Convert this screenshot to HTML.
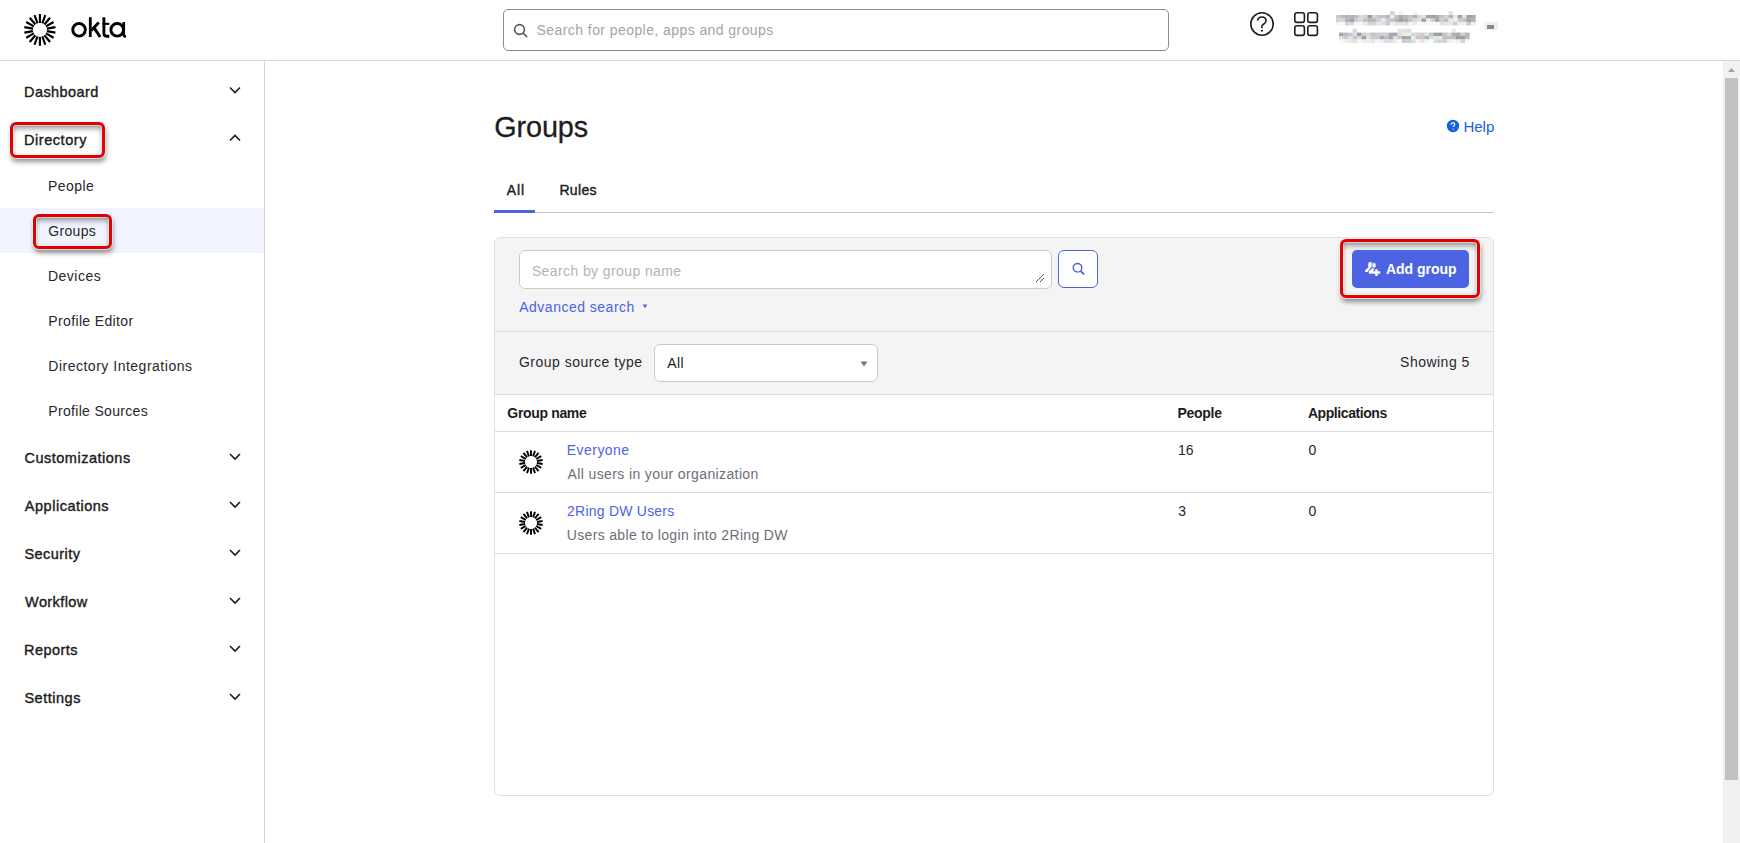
<!DOCTYPE html><html><head><meta charset="utf-8"><style>
html,body{margin:0;padding:0;width:1740px;height:843px;overflow:hidden;background:#fff;position:relative;font-family:"Liberation Sans", sans-serif;}
.t{position:absolute;white-space:nowrap;}
</style></head><body>
<div style="position:absolute;left:0px;top:60px;width:1740px;height:1px;background:#d8d8dc"></div>
<svg style="position:absolute;left:0;top:0" width="140" height="60"><path d="M46.79 31.12L55.46 32.64M45.96 33.40L53.58 37.80M44.40 35.26L50.06 42.00M42.29 36.48L45.30 44.75M39.90 36.90L39.90 45.70M37.51 36.48L34.50 44.75M35.40 35.26L29.74 42.00M33.84 33.40L26.22 37.80M33.01 31.12L24.34 32.64M33.01 28.68L24.34 27.16M33.84 26.40L26.22 22.00M35.40 24.54L29.74 17.80M37.51 23.32L34.50 15.05M39.90 22.90L39.90 14.10M42.29 23.32L45.30 15.05M44.40 24.54L50.06 17.80M45.96 26.40L53.58 22.00M46.79 28.68L55.46 27.16" stroke="#000" stroke-width="2.15" fill="none"/></svg>
<svg style="position:absolute;left:0;top:0" width="140" height="60" fill="none" stroke="#000"><circle cx="79.05" cy="29.85" r="6.3" stroke-width="2.9"/><path d="M90.3 17.2V37" stroke-width="2.8"/><path d="M91.2 30.6L98.8 22.4" stroke-width="2.9"/><path d="M94.3 28.2L100.2 37" stroke-width="3.0"/><path d="M103.9 17.2V33.6c0 1.9 0.9 2.6 2.6 2.6H109.3" stroke-width="2.9"/><path d="M102.5 23.85H109.3" stroke-width="2.1"/><circle cx="117.2" cy="29.85" r="6.3" stroke-width="2.9"/><path d="M123.75 22.1V34.4c0 1.3 0.8 2.1 2.2 2.1" stroke-width="2.6"/></svg>
<div style="position:absolute;left:503px;top:9px;width:666px;height:42px;box-sizing:border-box;border:1px solid #8c8c96;border-radius:5px;background:#fff"></div>
<svg style="position:absolute;left:512.6px;top:22.6px" width="16" height="16"><circle cx="6.5" cy="6.5" r="4.9" stroke="#56565c" stroke-width="1.6" fill="none"/><path d="M10 10L14 14" stroke="#56565c" stroke-width="1.7"/></svg>
<div class="t" style="left:536.58px;top:23.25px;font-size:14px;line-height:14px;font-weight:400;color:#a3a3aa;letter-spacing:0.428px">Search for people, apps and groups</div>
<svg style="position:absolute;left:1248px;top:10px" width="28" height="28"><circle cx="14" cy="14" r="11.2" stroke="#1d1d21" stroke-width="1.6" fill="none"/><path d="M9.5 10.6C9.8 8.3 11.7 7 14 7C16.4 7 18 8.6 18 10.7C18 12.7 16.4 13.6 15.2 14.4C14.3 15 13.9 15.7 13.9 16.6V18.2" stroke="#1d1d21" stroke-width="1.6" fill="none"/><circle cx="13.95" cy="20.7" r="1.05" fill="#1d1d21"/></svg>
<svg style="position:absolute;left:1292px;top:10px" width="30" height="30"><rect x="2.8" y="2.8" width="9.6" height="9.6" rx="2.2" stroke="#1d1d21" stroke-width="1.6" fill="none"/><rect x="15.8" y="2.8" width="9.6" height="9.6" rx="2.2" stroke="#1d1d21" stroke-width="1.6" fill="none"/><rect x="2.8" y="15.8" width="9.6" height="9.6" rx="2.2" stroke="#1d1d21" stroke-width="1.6" fill="none"/><rect x="15.8" y="15.8" width="9.6" height="9.6" rx="2.2" stroke="#1d1d21" stroke-width="1.6" fill="none"/></svg>
<svg style="position:absolute;left:1336px;top:11px" width="140" height="34"><rect x="9.0" y="0.2" width="4.7" height="4.0" fill="rgb(255,248,242)"/><rect x="22.5" y="0.2" width="4.7" height="4.0" fill="rgb(255,250,255)"/><rect x="54.0" y="0.2" width="4.7" height="4.0" fill="rgb(213,214,214)"/><rect x="63.0" y="0.2" width="4.7" height="4.0" fill="rgb(238,243,249)"/><rect x="76.5" y="0.2" width="4.7" height="4.0" fill="rgb(248,240,255)"/><rect x="112.5" y="0.2" width="4.7" height="4.0" fill="rgb(225,232,232)"/><rect x="0.0" y="4.0" width="4.7" height="3.6" fill="rgb(201,203,206)"/><rect x="4.5" y="4.0" width="4.7" height="3.6" fill="rgb(188,181,190)"/><rect x="9.0" y="4.0" width="4.7" height="3.6" fill="rgb(182,176,192)"/><rect x="13.5" y="4.0" width="4.7" height="3.6" fill="rgb(179,177,191)"/><rect x="18.0" y="4.0" width="4.7" height="3.6" fill="rgb(186,186,202)"/><rect x="22.5" y="4.0" width="4.7" height="3.6" fill="rgb(211,219,219)"/><rect x="27.0" y="4.0" width="4.7" height="3.6" fill="rgb(219,205,215)"/><rect x="31.5" y="4.0" width="4.7" height="3.6" fill="rgb(153,155,153)"/><rect x="36.0" y="4.0" width="4.7" height="3.6" fill="rgb(213,212,219)"/><rect x="40.5" y="4.0" width="4.7" height="3.6" fill="rgb(198,198,202)"/><rect x="45.0" y="4.0" width="4.7" height="3.6" fill="rgb(201,191,189)"/><rect x="49.5" y="4.0" width="4.7" height="3.6" fill="rgb(177,181,189)"/><rect x="54.0" y="4.0" width="4.7" height="3.6" fill="rgb(244,238,229)"/><rect x="58.5" y="4.0" width="4.7" height="3.6" fill="rgb(191,192,187)"/><rect x="63.0" y="4.0" width="4.7" height="3.6" fill="rgb(168,170,176)"/><rect x="67.5" y="4.0" width="4.7" height="3.6" fill="rgb(181,184,187)"/><rect x="72.0" y="4.0" width="4.7" height="3.6" fill="rgb(196,197,205)"/><rect x="76.5" y="4.0" width="4.7" height="3.6" fill="rgb(172,179,176)"/><rect x="81.0" y="4.0" width="4.7" height="3.6" fill="rgb(210,214,218)"/><rect x="85.5" y="4.0" width="4.7" height="3.6" fill="rgb(219,228,218)"/><rect x="90.0" y="4.0" width="4.7" height="3.6" fill="rgb(165,159,161)"/><rect x="94.5" y="4.0" width="4.7" height="3.6" fill="rgb(150,163,172)"/><rect x="99.0" y="4.0" width="4.7" height="3.6" fill="rgb(175,165,171)"/><rect x="103.5" y="4.0" width="4.7" height="3.6" fill="rgb(194,195,194)"/><rect x="108.0" y="4.0" width="4.7" height="3.6" fill="rgb(217,209,203)"/><rect x="112.5" y="4.0" width="4.7" height="3.6" fill="rgb(180,179,174)"/><rect x="117.0" y="4.0" width="4.7" height="3.6" fill="rgb(240,230,240)"/><rect x="121.5" y="4.0" width="4.7" height="3.6" fill="rgb(165,163,152)"/><rect x="126.0" y="4.0" width="4.7" height="3.6" fill="rgb(227,225,235)"/><rect x="130.5" y="4.0" width="4.7" height="3.6" fill="rgb(169,155,154)"/><rect x="135.0" y="4.0" width="4.7" height="3.6" fill="rgb(180,165,170)"/><rect x="0.0" y="7.4" width="4.7" height="3.6" fill="rgb(205,205,215)"/><rect x="4.5" y="7.4" width="4.7" height="3.6" fill="rgb(214,211,219)"/><rect x="9.0" y="7.4" width="4.7" height="3.6" fill="rgb(176,176,178)"/><rect x="13.5" y="7.4" width="4.7" height="3.6" fill="rgb(159,163,154)"/><rect x="18.0" y="7.4" width="4.7" height="3.6" fill="rgb(200,207,205)"/><rect x="22.5" y="7.4" width="4.7" height="3.6" fill="rgb(219,214,217)"/><rect x="27.0" y="7.4" width="4.7" height="3.6" fill="rgb(185,194,196)"/><rect x="31.5" y="7.4" width="4.7" height="3.6" fill="rgb(189,177,188)"/><rect x="36.0" y="7.4" width="4.7" height="3.6" fill="rgb(180,184,186)"/><rect x="40.5" y="7.4" width="4.7" height="3.6" fill="rgb(207,209,214)"/><rect x="45.0" y="7.4" width="4.7" height="3.6" fill="rgb(233,232,247)"/><rect x="49.5" y="7.4" width="4.7" height="3.6" fill="rgb(201,202,209)"/><rect x="54.0" y="7.4" width="4.7" height="3.6" fill="rgb(198,189,188)"/><rect x="58.5" y="7.4" width="4.7" height="3.6" fill="rgb(174,181,183)"/><rect x="63.0" y="7.4" width="4.7" height="3.6" fill="rgb(152,158,157)"/><rect x="67.5" y="7.4" width="4.7" height="3.6" fill="rgb(174,171,170)"/><rect x="72.0" y="7.4" width="4.7" height="3.6" fill="rgb(193,190,202)"/><rect x="76.5" y="7.4" width="4.7" height="3.6" fill="rgb(220,219,217)"/><rect x="81.0" y="7.4" width="4.7" height="3.6" fill="rgb(229,224,219)"/><rect x="85.5" y="7.4" width="4.7" height="3.6" fill="rgb(158,163,153)"/><rect x="90.0" y="7.4" width="4.7" height="3.6" fill="rgb(233,238,238)"/><rect x="94.5" y="7.4" width="4.7" height="3.6" fill="rgb(205,201,205)"/><rect x="99.0" y="7.4" width="4.7" height="3.6" fill="rgb(170,156,164)"/><rect x="103.5" y="7.4" width="4.7" height="3.6" fill="rgb(206,204,210)"/><rect x="108.0" y="7.4" width="4.7" height="3.6" fill="rgb(184,196,183)"/><rect x="112.5" y="7.4" width="4.7" height="3.6" fill="rgb(228,236,230)"/><rect x="117.0" y="7.4" width="4.7" height="3.6" fill="rgb(242,239,247)"/><rect x="121.5" y="7.4" width="4.7" height="3.6" fill="rgb(192,204,198)"/><rect x="126.0" y="7.4" width="4.7" height="3.6" fill="rgb(195,188,187)"/><rect x="130.5" y="7.4" width="4.7" height="3.6" fill="rgb(165,162,153)"/><rect x="135.0" y="7.4" width="4.7" height="3.6" fill="rgb(177,178,183)"/><rect x="0.0" y="10.8" width="4.7" height="3.6" fill="rgb(244,240,249)"/><rect x="4.5" y="10.8" width="4.7" height="3.6" fill="rgb(245,250,249)"/><rect x="9.0" y="10.8" width="4.7" height="3.6" fill="rgb(208,210,209)"/><rect x="13.5" y="10.8" width="4.7" height="3.6" fill="rgb(219,216,213)"/><rect x="18.0" y="10.8" width="4.7" height="3.6" fill="rgb(235,245,254)"/><rect x="22.5" y="10.8" width="4.7" height="3.6" fill="rgb(248,240,240)"/><rect x="27.0" y="10.8" width="4.7" height="3.6" fill="rgb(232,236,230)"/><rect x="31.5" y="10.8" width="4.7" height="3.6" fill="rgb(215,210,200)"/><rect x="36.0" y="10.8" width="4.7" height="3.6" fill="rgb(212,215,209)"/><rect x="40.5" y="10.8" width="4.7" height="3.6" fill="rgb(232,231,227)"/><rect x="45.0" y="10.8" width="4.7" height="3.6" fill="rgb(215,224,233)"/><rect x="49.5" y="10.8" width="4.7" height="3.6" fill="rgb(196,206,207)"/><rect x="54.0" y="10.8" width="4.7" height="3.6" fill="rgb(241,244,238)"/><rect x="58.5" y="10.8" width="4.7" height="3.6" fill="rgb(222,229,226)"/><rect x="63.0" y="10.8" width="4.7" height="3.6" fill="rgb(223,228,241)"/><rect x="67.5" y="10.8" width="4.7" height="3.6" fill="rgb(219,226,221)"/><rect x="72.0" y="10.8" width="4.7" height="3.6" fill="rgb(244,242,244)"/><rect x="76.5" y="10.8" width="4.7" height="3.6" fill="rgb(240,237,226)"/><rect x="81.0" y="10.8" width="4.7" height="3.6" fill="rgb(247,251,255)"/><rect x="85.5" y="10.8" width="4.7" height="3.6" fill="rgb(237,243,247)"/><rect x="90.0" y="10.8" width="4.7" height="3.6" fill="rgb(240,247,253)"/><rect x="94.5" y="10.8" width="4.7" height="3.6" fill="rgb(255,248,251)"/><rect x="99.0" y="10.8" width="4.7" height="3.6" fill="rgb(247,248,243)"/><rect x="103.5" y="10.8" width="4.7" height="3.6" fill="rgb(219,227,233)"/><rect x="108.0" y="10.8" width="4.7" height="3.6" fill="rgb(233,226,223)"/><rect x="112.5" y="10.8" width="4.7" height="3.6" fill="rgb(239,227,240)"/><rect x="117.0" y="10.8" width="4.7" height="3.6" fill="rgb(214,205,197)"/><rect x="121.5" y="10.8" width="4.7" height="3.6" fill="rgb(229,240,242)"/><rect x="126.0" y="10.8" width="4.7" height="3.6" fill="rgb(246,233,245)"/><rect x="130.5" y="10.8" width="4.7" height="3.6" fill="rgb(200,200,214)"/><rect x="135.0" y="10.8" width="4.7" height="3.6" fill="rgb(235,238,236)"/><rect x="16.5" y="17.8" width="4.7" height="4.0" fill="rgb(215,219,223)"/><rect x="61.5" y="17.8" width="4.7" height="4.0" fill="rgb(225,228,227)"/><rect x="66.0" y="17.8" width="4.7" height="4.0" fill="rgb(221,231,223)"/><rect x="70.5" y="17.8" width="4.7" height="4.0" fill="rgb(222,221,219)"/><rect x="115.5" y="17.8" width="4.7" height="4.0" fill="rgb(228,238,228)"/><rect x="3.0" y="21.6" width="4.7" height="3.6" fill="rgb(170,165,153)"/><rect x="7.5" y="21.6" width="4.7" height="3.6" fill="rgb(185,190,196)"/><rect x="12.0" y="21.6" width="4.7" height="3.6" fill="rgb(201,200,198)"/><rect x="16.5" y="21.6" width="4.7" height="3.6" fill="rgb(220,220,233)"/><rect x="21.0" y="21.6" width="4.7" height="3.6" fill="rgb(160,155,172)"/><rect x="25.5" y="21.6" width="4.7" height="3.6" fill="rgb(213,208,203)"/><rect x="30.0" y="21.6" width="4.7" height="3.6" fill="rgb(223,214,215)"/><rect x="34.5" y="21.6" width="4.7" height="3.6" fill="rgb(188,200,192)"/><rect x="39.0" y="21.6" width="4.7" height="3.6" fill="rgb(199,204,214)"/><rect x="43.5" y="21.6" width="4.7" height="3.6" fill="rgb(203,206,197)"/><rect x="48.0" y="21.6" width="4.7" height="3.6" fill="rgb(201,210,202)"/><rect x="52.5" y="21.6" width="4.7" height="3.6" fill="rgb(170,168,177)"/><rect x="57.0" y="21.6" width="4.7" height="3.6" fill="rgb(160,169,182)"/><rect x="61.5" y="21.6" width="4.7" height="3.6" fill="rgb(216,222,225)"/><rect x="66.0" y="21.6" width="4.7" height="3.6" fill="rgb(234,234,233)"/><rect x="70.5" y="21.6" width="4.7" height="3.6" fill="rgb(237,238,232)"/><rect x="75.0" y="21.6" width="4.7" height="3.6" fill="rgb(207,215,223)"/><rect x="79.5" y="21.6" width="4.7" height="3.6" fill="rgb(220,207,205)"/><rect x="84.0" y="21.6" width="4.7" height="3.6" fill="rgb(213,199,200)"/><rect x="88.5" y="21.6" width="4.7" height="3.6" fill="rgb(218,230,224)"/><rect x="93.0" y="21.6" width="4.7" height="3.6" fill="rgb(199,195,203)"/><rect x="97.5" y="21.6" width="4.7" height="3.6" fill="rgb(156,164,164)"/><rect x="102.0" y="21.6" width="4.7" height="3.6" fill="rgb(153,158,160)"/><rect x="106.5" y="21.6" width="4.7" height="3.6" fill="rgb(195,197,204)"/><rect x="111.0" y="21.6" width="4.7" height="3.6" fill="rgb(218,217,225)"/><rect x="115.5" y="21.6" width="4.7" height="3.6" fill="rgb(180,171,182)"/><rect x="120.0" y="21.6" width="4.7" height="3.6" fill="rgb(177,173,163)"/><rect x="124.5" y="21.6" width="4.7" height="3.6" fill="rgb(200,205,212)"/><rect x="129.0" y="21.6" width="4.7" height="3.6" fill="rgb(185,182,191)"/><rect x="3.0" y="25.0" width="4.7" height="3.6" fill="rgb(216,225,232)"/><rect x="7.5" y="25.0" width="4.7" height="3.6" fill="rgb(204,207,209)"/><rect x="12.0" y="25.0" width="4.7" height="3.6" fill="rgb(224,224,233)"/><rect x="16.5" y="25.0" width="4.7" height="3.6" fill="rgb(200,199,195)"/><rect x="21.0" y="25.0" width="4.7" height="3.6" fill="rgb(214,219,216)"/><rect x="25.5" y="25.0" width="4.7" height="3.6" fill="rgb(150,166,159)"/><rect x="30.0" y="25.0" width="4.7" height="3.6" fill="rgb(216,229,222)"/><rect x="34.5" y="25.0" width="4.7" height="3.6" fill="rgb(207,199,207)"/><rect x="39.0" y="25.0" width="4.7" height="3.6" fill="rgb(196,208,207)"/><rect x="43.5" y="25.0" width="4.7" height="3.6" fill="rgb(167,170,177)"/><rect x="48.0" y="25.0" width="4.7" height="3.6" fill="rgb(192,189,203)"/><rect x="52.5" y="25.0" width="4.7" height="3.6" fill="rgb(174,166,169)"/><rect x="57.0" y="25.0" width="4.7" height="3.6" fill="rgb(218,219,236)"/><rect x="61.5" y="25.0" width="4.7" height="3.6" fill="rgb(209,200,203)"/><rect x="66.0" y="25.0" width="4.7" height="3.6" fill="rgb(161,162,156)"/><rect x="70.5" y="25.0" width="4.7" height="3.6" fill="rgb(171,171,166)"/><rect x="75.0" y="25.0" width="4.7" height="3.6" fill="rgb(238,236,246)"/><rect x="79.5" y="25.0" width="4.7" height="3.6" fill="rgb(205,198,200)"/><rect x="84.0" y="25.0" width="4.7" height="3.6" fill="rgb(206,196,201)"/><rect x="88.5" y="25.0" width="4.7" height="3.6" fill="rgb(177,181,175)"/><rect x="93.0" y="25.0" width="4.7" height="3.6" fill="rgb(214,221,223)"/><rect x="97.5" y="25.0" width="4.7" height="3.6" fill="rgb(226,223,225)"/><rect x="102.0" y="25.0" width="4.7" height="3.6" fill="rgb(233,230,235)"/><rect x="106.5" y="25.0" width="4.7" height="3.6" fill="rgb(200,188,189)"/><rect x="111.0" y="25.0" width="4.7" height="3.6" fill="rgb(187,192,202)"/><rect x="115.5" y="25.0" width="4.7" height="3.6" fill="rgb(181,194,183)"/><rect x="120.0" y="25.0" width="4.7" height="3.6" fill="rgb(158,158,165)"/><rect x="124.5" y="25.0" width="4.7" height="3.6" fill="rgb(169,154,155)"/><rect x="129.0" y="25.0" width="4.7" height="3.6" fill="rgb(197,188,184)"/><rect x="3.0" y="28.4" width="4.7" height="3.6" fill="rgb(242,254,247)"/><rect x="7.5" y="28.4" width="4.7" height="3.6" fill="rgb(235,242,241)"/><rect x="12.0" y="28.4" width="4.7" height="3.6" fill="rgb(237,231,230)"/><rect x="16.5" y="28.4" width="4.7" height="3.6" fill="rgb(225,226,221)"/><rect x="21.0" y="28.4" width="4.7" height="3.6" fill="rgb(242,255,245)"/><rect x="25.5" y="28.4" width="4.7" height="3.6" fill="rgb(241,238,230)"/><rect x="30.0" y="28.4" width="4.7" height="3.6" fill="rgb(235,237,232)"/><rect x="34.5" y="28.4" width="4.7" height="3.6" fill="rgb(226,231,228)"/><rect x="39.0" y="28.4" width="4.7" height="3.6" fill="rgb(254,244,246)"/><rect x="43.5" y="28.4" width="4.7" height="3.6" fill="rgb(233,238,250)"/><rect x="48.0" y="28.4" width="4.7" height="3.6" fill="rgb(233,220,231)"/><rect x="52.5" y="28.4" width="4.7" height="3.6" fill="rgb(217,227,219)"/><rect x="57.0" y="28.4" width="4.7" height="3.6" fill="rgb(240,235,239)"/><rect x="61.5" y="28.4" width="4.7" height="3.6" fill="rgb(254,248,242)"/><rect x="66.0" y="28.4" width="4.7" height="3.6" fill="rgb(204,202,216)"/><rect x="70.5" y="28.4" width="4.7" height="3.6" fill="rgb(204,206,207)"/><rect x="75.0" y="28.4" width="4.7" height="3.6" fill="rgb(219,222,228)"/><rect x="79.5" y="28.4" width="4.7" height="3.6" fill="rgb(245,244,240)"/><rect x="84.0" y="28.4" width="4.7" height="3.6" fill="rgb(229,228,236)"/><rect x="88.5" y="28.4" width="4.7" height="3.6" fill="rgb(243,246,253)"/><rect x="93.0" y="28.4" width="4.7" height="3.6" fill="rgb(249,251,252)"/><rect x="97.5" y="28.4" width="4.7" height="3.6" fill="rgb(217,220,223)"/><rect x="102.0" y="28.4" width="4.7" height="3.6" fill="rgb(207,214,218)"/><rect x="106.5" y="28.4" width="4.7" height="3.6" fill="rgb(206,209,209)"/><rect x="111.0" y="28.4" width="4.7" height="3.6" fill="rgb(240,244,236)"/><rect x="115.5" y="28.4" width="4.7" height="3.6" fill="rgb(253,244,249)"/><rect x="120.0" y="28.4" width="4.7" height="3.6" fill="rgb(232,241,248)"/><rect x="124.5" y="28.4" width="4.7" height="3.6" fill="rgb(210,210,221)"/><rect x="129.0" y="28.4" width="4.7" height="3.6" fill="rgb(249,255,242)"/></svg>
<div style="position:absolute;left:1484px;top:22px;width:14px;height:8px;background:#f0f0f0"></div>
<div style="position:absolute;left:1487px;top:25px;width:7px;height:3.6px;background:#8a8a8a"></div>
<div style="position:absolute;left:264px;top:61px;width:1px;height:782px;background:#d8d8dc"></div>
<div style="position:absolute;left:0px;top:208px;width:264px;height:45px;background:#f1f4fe"></div>
<div class="t" style="left:24.05px;top:84.93px;font-size:14.5px;line-height:14.5px;font-weight:400;-webkit-text-stroke:0.4px currentColor;color:#1d1d21;letter-spacing:0.43px">Dashboard</div>
<svg style="position:absolute;left:0;top:0;overflow:visible" width="1" height="1"><path d="M230 87.5L235 92.5L240 87.5" stroke="#1d1d21" stroke-width="1.6" fill="none"/></svg>
<div class="t" style="left:23.95px;top:132.73px;font-size:14.5px;line-height:14.5px;font-weight:400;-webkit-text-stroke:0.4px currentColor;color:#1d1d21;letter-spacing:0.562px">Directory</div>
<svg style="position:absolute;left:0;top:0;overflow:visible" width="1" height="1"><path d="M230 140.5L235 135.5L240 140.5" stroke="#1d1d21" stroke-width="1.6" fill="none"/></svg>
<div class="t" style="left:47.88px;top:179.15px;font-size:14px;line-height:14px;font-weight:400;color:#27272c;letter-spacing:0.456px">People</div>
<div class="t" style="left:48.23px;top:224.15px;font-size:14px;line-height:14px;font-weight:400;color:#27272c;letter-spacing:0.34px">Groups</div>
<div class="t" style="left:47.98px;top:268.95px;font-size:14px;line-height:14px;font-weight:400;color:#27272c;letter-spacing:0.503px">Devices</div>
<div class="t" style="left:48.28px;top:313.95px;font-size:14px;line-height:14px;font-weight:400;color:#27272c;letter-spacing:0.365px">Profile Editor</div>
<div class="t" style="left:48.28px;top:358.95px;font-size:14px;line-height:14px;font-weight:400;color:#27272c;letter-spacing:0.507px">Directory Integrations</div>
<div class="t" style="left:48.28px;top:403.95px;font-size:14px;line-height:14px;font-weight:400;color:#27272c;letter-spacing:0.318px">Profile Sources</div>
<div class="t" style="left:24.43px;top:450.83px;font-size:14.5px;line-height:14.5px;font-weight:400;-webkit-text-stroke:0.4px currentColor;color:#1d1d21;letter-spacing:0.511px">Customizations</div>
<svg style="position:absolute;left:0;top:0;overflow:visible" width="1" height="1"><path d="M230 454.0L235 459.0L240 454.0" stroke="#1d1d21" stroke-width="1.6" fill="none"/></svg>
<div class="t" style="left:24.85px;top:498.73px;font-size:14.5px;line-height:14.5px;font-weight:400;-webkit-text-stroke:0.4px currentColor;color:#1d1d21;letter-spacing:0.508px">Applications</div>
<svg style="position:absolute;left:0;top:0;overflow:visible" width="1" height="1"><path d="M230 502.0L235 507.0L240 502.0" stroke="#1d1d21" stroke-width="1.6" fill="none"/></svg>
<div class="t" style="left:24.42px;top:546.93px;font-size:14.5px;line-height:14.5px;font-weight:400;-webkit-text-stroke:0.4px currentColor;color:#1d1d21;letter-spacing:0.459px">Security</div>
<svg style="position:absolute;left:0;top:0;overflow:visible" width="1" height="1"><path d="M230 550.0L235 555.0L240 550.0" stroke="#1d1d21" stroke-width="1.6" fill="none"/></svg>
<div class="t" style="left:25.05px;top:594.83px;font-size:14.5px;line-height:14.5px;font-weight:400;-webkit-text-stroke:0.4px currentColor;color:#1d1d21;letter-spacing:0.418px">Workflow</div>
<svg style="position:absolute;left:0;top:0;overflow:visible" width="1" height="1"><path d="M230 598.0L235 603.0L240 598.0" stroke="#1d1d21" stroke-width="1.6" fill="none"/></svg>
<div class="t" style="left:24.05px;top:642.83px;font-size:14.5px;line-height:14.5px;font-weight:400;-webkit-text-stroke:0.4px currentColor;color:#1d1d21;letter-spacing:0.456px">Reports</div>
<svg style="position:absolute;left:0;top:0;overflow:visible" width="1" height="1"><path d="M230 646.0L235 651.0L240 646.0" stroke="#1d1d21" stroke-width="1.6" fill="none"/></svg>
<div class="t" style="left:24.42px;top:690.83px;font-size:14.5px;line-height:14.5px;font-weight:400;-webkit-text-stroke:0.4px currentColor;color:#1d1d21;letter-spacing:0.515px">Settings</div>
<svg style="position:absolute;left:0;top:0;overflow:visible" width="1" height="1"><path d="M230 694.0L235 699.0L240 694.0" stroke="#1d1d21" stroke-width="1.6" fill="none"/></svg>
<div class="t" style="left:494.36px;top:113.32px;font-size:28.8px;line-height:28.8px;font-weight:400;-webkit-text-stroke:0.3px currentColor;color:#1d1d21;letter-spacing:-0.152px">Groups</div>
<svg style="position:absolute;left:1446px;top:119px" width="14" height="14"><circle cx="7" cy="7" r="6.2" fill="#1662dd"/><path d="M5.2 5.6c0-1.1.8-1.8 1.8-1.8s1.8.7 1.8 1.6c0 1.2-1.6 1.3-1.6 2.6" stroke="#fff" stroke-width="1.2" fill="none"/><circle cx="7.2" cy="10.1" r=".7" fill="#fff"/></svg>
<div class="t" style="left:1463.48px;top:118.70px;font-size:15px;line-height:15px;font-weight:400;color:#1662dd;letter-spacing:-0.015px">Help</div>
<div class="t" style="left:506.85px;top:183.05px;font-size:14px;line-height:14px;font-weight:400;-webkit-text-stroke:0.4px currentColor;color:#1d1d21;letter-spacing:0.841px">All</div>
<div class="t" style="left:559.41px;top:183.05px;font-size:14px;line-height:14px;font-weight:400;-webkit-text-stroke:0.4px currentColor;color:#1d1d21;letter-spacing:0.338px">Rules</div>
<div style="position:absolute;left:494px;top:212px;width:1000px;height:1px;background:#c8c8cc"></div>
<div style="position:absolute;left:494px;top:210px;width:41px;height:3px;background:#4c64e1"></div>
<div style="position:absolute;left:494px;top:237px;width:1000px;height:559px;box-sizing:border-box;border:1px solid #e0e0e0;border-radius:6px;background:#fff;overflow:hidden"></div>
<div style="position:absolute;left:495px;top:238px;width:998px;height:156px;background:#f4f4f4;border-radius:5px 5px 0 0"></div>
<div style="position:absolute;left:495px;top:331px;width:998px;height:1px;background:#dcdcdf"></div>
<div style="position:absolute;left:495px;top:394px;width:998px;height:1px;background:#dcdcdf"></div>
<div style="position:absolute;left:519px;top:250px;width:533px;height:39px;box-sizing:border-box;border:1px solid #cbcbcb;border-radius:6px;background:#fff"></div>
<div class="t" style="left:531.88px;top:263.75px;font-size:14px;line-height:14px;font-weight:400;color:#b3b3b8;letter-spacing:0.399px">Search by group name</div>
<svg style="position:absolute;left:1034px;top:272px" width="12" height="12"><path d="M2 10L10 2M6 10L10 6" stroke="#555" stroke-width="1"/></svg>
<div style="position:absolute;left:1058px;top:250px;width:40px;height:38px;box-sizing:border-box;border:1px solid #4c64e1;border-radius:6px;background:#fff"></div>
<svg style="position:absolute;left:1071px;top:262px" width="16" height="16"><circle cx="6.5" cy="5.8" r="4.3" stroke="#4c64e1" stroke-width="1.4" fill="none"/><path d="M9.6 9L13.1 12.3" stroke="#4c64e1" stroke-width="1.8"/></svg>
<div class="t" style="left:519.25px;top:299.75px;font-size:14px;line-height:14px;font-weight:400;color:#4c64e1;letter-spacing:0.492px">Advanced search</div>
<svg style="position:absolute;left:641px;top:302px" width="8" height="8"><path d="M1.6 2.6L6.4 2.6L4 6.2Z" fill="#4c64e1"/></svg>
<div style="position:absolute;left:1352px;top:250px;width:117px;height:38px;background:#4c64e1;border-radius:5px"></div>
<svg style="position:absolute;left:1360px;top:258px" width="24" height="22"><g fill="#fff"><rect x="8.2" y="3.9" width="4.1" height="5.9" rx="2"/><path d="M8.8 8.8L11 9.6L8.6 12.6L8.6 13.9H5V12.4Z"/></g><g fill="#fff" stroke="#4c64e1" stroke-width="0.8"><rect x="12" y="4.6" width="4" height="5.6" rx="2"/><path d="M12.3 9.8L14.6 10.4L14.6 16H8.4V13.2Z"/></g><path d="M16.5 11.2V18M13 14.55H20.2" stroke="#4c64e1" stroke-width="4.2"/><path d="M16.5 11.2V18M13 14.55H20.2" stroke="#fff" stroke-width="2.4"/></svg>
<div class="t" style="left:1385.94px;top:262.15px;font-size:14px;line-height:14px;font-weight:700;color:#ffffff;letter-spacing:-0.015px">Add group</div>
<div class="t" style="left:518.93px;top:355.15px;font-size:14px;line-height:14px;font-weight:400;color:#27272c;letter-spacing:0.5px">Group source type</div>
<div style="position:absolute;left:654px;top:344px;width:224px;height:38px;box-sizing:border-box;border:1px solid #cbcbcb;border-radius:6px;background:#fff"></div>
<div class="t" style="left:667.35px;top:356.05px;font-size:14px;line-height:14px;font-weight:400;color:#1d1d21;letter-spacing:0.385px">All</div>
<svg style="position:absolute;left:859px;top:359.5px" width="10" height="8"><path d="M1.5 1.5L8.5 1.5L5 6.5Z" fill="#77777c"/></svg>
<div class="t" style="left:1400.08px;top:355.25px;font-size:14px;line-height:14px;font-weight:400;color:#27272c;letter-spacing:0.48px">Showing 5</div>
<div class="t" style="left:507.36px;top:406.05px;font-size:14px;line-height:14px;font-weight:700;color:#1d1d21;letter-spacing:-0.343px">Group name</div>
<div class="t" style="left:1177.39px;top:406.05px;font-size:14px;line-height:14px;font-weight:700;color:#1d1d21;letter-spacing:-0.248px">People</div>
<div class="t" style="left:1307.94px;top:406.05px;font-size:14px;line-height:14px;font-weight:700;color:#1d1d21;letter-spacing:-0.426px">Applications</div>
<div style="position:absolute;left:495px;top:431px;width:998px;height:1px;background:#dcdcdf"></div>
<svg style="position:absolute;left:0;top:0;overflow:visible" width="1" height="1"><path d="M536.91 463.04L542.62 464.05M536.20 465.00L541.22 467.90M534.86 466.60L538.58 471.04M533.05 467.64L535.04 473.09M531.00 468.00L531.00 473.80M528.95 467.64L526.96 473.09M527.14 466.60L523.42 471.04M525.80 465.00L520.78 467.90M525.09 463.04L519.38 464.05M525.09 460.96L519.38 459.95M525.80 459.00L520.78 456.10M527.14 457.40L523.42 452.96M528.95 456.36L526.96 450.91M531.00 456.00L531.00 450.20M533.05 456.36L535.04 450.91M534.86 457.40L538.58 452.96M536.20 459.00L541.22 456.10M536.91 460.96L542.62 459.95" stroke="#000" stroke-width="1.9" fill="none"/></svg>
<div class="t" style="left:566.78px;top:443.35px;font-size:14px;line-height:14px;font-weight:400;color:#4c64e1;letter-spacing:0.461px">Everyone</div>
<div class="t" style="left:567.55px;top:466.85px;font-size:14px;line-height:14px;font-weight:400;color:#6e6e78;letter-spacing:0.38px">All users in your organization</div>
<div class="t" style="left:1178.01px;top:443.15px;font-size:14px;line-height:14px;font-weight:400;color:#27272c;letter-spacing:0.0px">16</div>
<div class="t" style="left:1308.4px;top:443.15px;font-size:14px;line-height:14px;font-weight:400;color:#27272c;letter-spacing:0.0px">0</div>
<div style="position:absolute;left:495px;top:492px;width:998px;height:1px;background:#dcdcdf"></div>
<svg style="position:absolute;left:0;top:0;overflow:visible" width="1" height="1"><path d="M536.91 524.04L542.62 525.05M536.20 526.00L541.22 528.90M534.86 527.60L538.58 532.04M533.05 528.64L535.04 534.09M531.00 529.00L531.00 534.80M528.95 528.64L526.96 534.09M527.14 527.60L523.42 532.04M525.80 526.00L520.78 528.90M525.09 524.04L519.38 525.05M525.09 521.96L519.38 520.95M525.80 520.00L520.78 517.10M527.14 518.40L523.42 513.96M528.95 517.36L526.96 511.91M531.00 517.00L531.00 511.20M533.05 517.36L535.04 511.91M534.86 518.40L538.58 513.96M536.20 520.00L541.22 517.10M536.91 521.96L542.62 520.95" stroke="#000" stroke-width="1.9" fill="none"/></svg>
<div class="t" style="left:567.06px;top:504.15px;font-size:14px;line-height:14px;font-weight:400;color:#4c64e1;letter-spacing:0.229px">2Ring DW Users</div>
<div class="t" style="left:566.81px;top:528.45px;font-size:14px;line-height:14px;font-weight:400;color:#6e6e78;letter-spacing:0.33px">Users able to login into 2Ring DW</div>
<div class="t" style="left:1178.25px;top:503.95px;font-size:14px;line-height:14px;font-weight:400;color:#27272c;letter-spacing:0.0px">3</div>
<div class="t" style="left:1308.4px;top:503.95px;font-size:14px;line-height:14px;font-weight:400;color:#27272c;letter-spacing:0.0px">0</div>
<div style="position:absolute;left:495px;top:553px;width:998px;height:1px;background:#dcdcdf"></div>
<div style="position:absolute;left:10px;top:122px;width:94.5px;height:36px;box-sizing:border-box;border:3px solid #e30000;border-radius:6px;box-shadow:0 0 0 1px rgba(235,250,250,0.7), 1px 4px 5px 0px rgba(0,0,0,0.42), inset 0 0 0 1px rgba(235,250,250,0.6), inset 0px 5px 6px -2px rgba(0,0,0,0.42), inset 0 0 4px rgba(0,0,0,0.18)"></div>
<div style="position:absolute;left:33px;top:214px;width:79px;height:35px;box-sizing:border-box;border:3px solid #e30000;border-radius:6px;box-shadow:0 0 0 1px rgba(235,250,250,0.7), 1px 4px 5px 0px rgba(0,0,0,0.42), inset 0 0 0 1px rgba(235,250,250,0.6), inset 0px 5px 6px -2px rgba(0,0,0,0.42), inset 0 0 4px rgba(0,0,0,0.18)"></div>
<div style="position:absolute;left:1340px;top:239px;width:140px;height:59px;box-sizing:border-box;border:3px solid #e30000;border-radius:6px;box-shadow:0 0 0 1px rgba(235,250,250,0.7), 1px 4px 5px 0px rgba(0,0,0,0.42), inset 0 0 0 1px rgba(235,250,250,0.6), inset 0px 5px 6px -2px rgba(0,0,0,0.42), inset 0 0 4px rgba(0,0,0,0.18)"></div>
<div style="position:absolute;left:1723px;top:61px;width:17px;height:782px;background:#f1f1f1"></div>
<svg style="position:absolute;left:1723px;top:63px" width="17" height="14"><path d="M5 9L8.5 5L12 9Z" fill="#a3a3a3"/></svg>
<div style="position:absolute;left:1725px;top:78px;width:13px;height:702px;background:#c1c1c1"></div>
</body></html>
